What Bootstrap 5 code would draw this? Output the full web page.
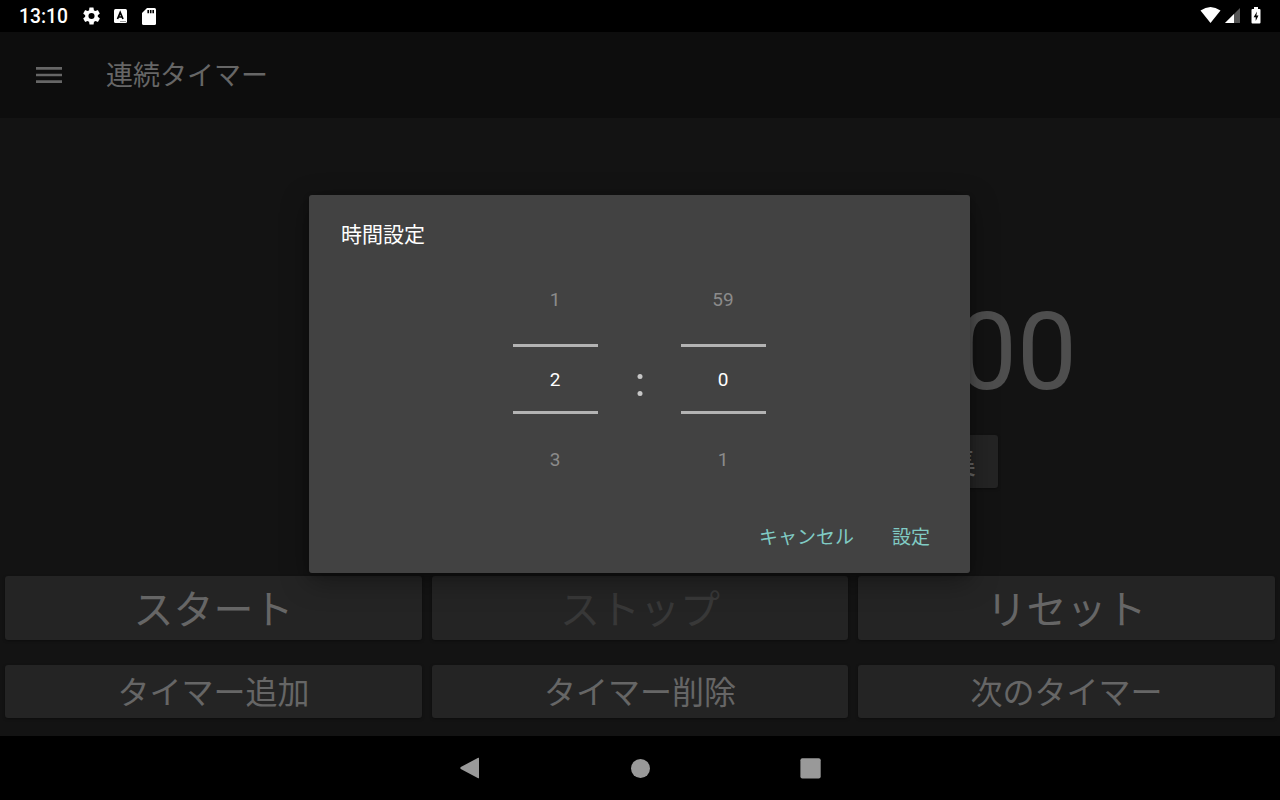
<!DOCTYPE html>
<html lang="ja">
<head>
<meta charset="utf-8">
<meta name="viewport" content="width=device-width, initial-scale=1">
<title>連続タイマー</title>
<link href="https://cdn.jsdelivr.net/npm/bootstrap@5.3.0/dist/css/bootstrap.min.css" rel="stylesheet">
<style>
body{font-family:Roboto,"Noto Sans CJK JP",sans-serif;background:#131313;color:#666;width:1280px;height:800px;line-height:1}
.status-bar{height:32px;background:#000;color:#fff;font-size:19.3px;font-weight:500;padding:0 18px 0 19px}
.clock{width:64px;padding-top:1px}
.icon-app{margin-left:14px}
.icon-card{margin-left:15px}
.icon-signal{margin-left:4px}
.icon-battery{margin:0 1px 2px 11px}
.app-bar{height:86px;background:#0d0d0d;padding-left:36px}
.app-title{font-size:27px;margin-left:44px;padding-top:2px}
.stage{height:458px;padding:172px 203px 0 0}
.digits{font-size:106.67px;line-height:125px;color:#4e4e4e;margin-bottom:20px}
.tile{background:#242424;color:#666;border-radius:3px;box-shadow:0 1px 3px rgba(0,0,0,.35);border:0;padding:3px 0 0;height:53px;font-size:32px;line-height:1}
.tile-lg{height:64px;font-size:40px;padding-top:5px}
.tile:disabled{background:#242424;color:#383838;opacity:1}
.tile-edit{width:108px;margin-right:79px}
.tile-grid{display:grid;grid-template-columns:417px 416px 417px;column-gap:10px;row-gap:25px;padding:0 5px;height:160px;align-content:start}
.nav-keys{height:64px;background:#000;gap:150px}
.scrim{top:32px;left:0;width:1279px;height:704px}
.dialog{width:661px;height:378px;background:#424242;border-radius:3px;box-shadow:0 8px 28px rgba(0,0,0,.35),0 2px 6px rgba(0,0,0,.2);padding:0 32px}
.dialog-title{font-size:21px;color:#fff;height:79px;padding-top:2px}
.pickers{height:214px;padding-right:1px}
.picker{width:85px;font-size:19px;color:#8b8b8b}
.picker>div{height:50px}
.picker .chosen{height:70px;margin:20px 0;border-top:3px solid #b3b3b3;border-bottom:3px solid #b3b3b3;color:#fff}
.sep{width:83px;padding-top:7px;padding-left:1px}
.actions{height:72px;font-size:19px;padding-right:8px;gap:38px}
.act{color:#80cbc4;background:none;border:0;padding:0}
</style>
<script src="https://cdn.jsdelivr.net/npm/bootstrap@5.3.0/dist/js/bootstrap.bundle.min.js"></script>
</head>
<body class="overflow-hidden position-relative d-flex flex-column">
<header class="status-bar d-flex align-items-center flex-shrink-0">
  <span class="clock">13:10</span>
  <svg width="17" height="18" viewBox="2 2 20 20" fill="#fff"><path d="M19.4 13a7.500 7.500 0 0 0 0-2l2.100-1.600a.5.5 0 0 0 .1-.7l-2-3.400a.5.5 0 0 0-.6-.2l-2.500 1a7.300 7.300 0 0 0-1.700-1L14.400 2.400a.5.5 0 0 0-.4-.4h-4a.5.5 0 0 0-.5.400L9.200 5.100a7.700 7.700 0 0 0-1.700 1L5 5.100a.5.5 0 0 0-.6.200l-2 3.400a.5.5 0 0 0 .1.700L4.600 11a7.500 7.500 0 0 0 0 2l-2.100 1.600a.5.5 0 0 0-.1.700l2 3.400c.1.200.4.300.6.200l2.500-1c.5.400 1.100.7 1.700 1l.4 2.700c0 .2.200.4.400.4h4c.2 0 .5-.2.500-.4l.4-2.700a7.300 7.300 0 0 0 1.700-1l2.500 1c.2.100.5 0 .6-.2l2-3.400a.5.5 0 0 0-.1-.7zM12 15.600a3.600 3.600 0 1 1 0-7.200 3.600 3.600 0 0 1 0 7.200z"/></svg>
  <svg class="icon-app" width="13" height="14" viewBox="0 0 13 14"><rect width="13" height="14" rx="1.500" fill="#fff"/><path d="M3.500 10 6.200 3.500 9 10M4.500 8h3.600" stroke="#000" stroke-width="1.700" fill="none"/><path d="M6.500 12.500h1m1 0h1m1 0h1" stroke="#333"/></svg>
  <svg class="icon-card" width="14" height="17" viewBox="0 0 14 17"><path d="M5 0h7.500Q14 0 14 1.500v14Q14 17 12.500 17h-11Q0 17 0 15.500V5z" fill="#fff"/><path d="M6.200 2v3.200M8.700 2v3.200M11.200 2v3.200" stroke="#000" stroke-width="1.600"/></svg>
  <div class="ms-auto d-flex align-items-center">
    <svg width="21" height="18" viewBox="0 0 21 18"><path d="M.5 3.500Q10.500-3.500 20.500 3.500L10.500 16z" fill="#fff"/></svg>
    <svg class="icon-signal" width="15" height="17" viewBox="0 0 15 17"><path d="M15 0v15H0z" fill="#555"/><path d="M9 6v9H0z" fill="#fff"/></svg>
    <svg class="icon-battery" width="10" height="17" viewBox="0 0 10 17"><path d="M3 0h4v2h1.500q1 0 1 1v12.500q0 1-1 1h-7q-1 0-1-1V3q0-1 1-1H3z" fill="#fff"/><path d="M6 4.500 2.600 10.200h2.100V14L7.500 8.500H5.400z" fill="#000"/></svg>
  </div>
</header>
<div class="app-bar d-flex align-items-center flex-shrink-0">
  <svg width="26" height="18" viewBox="0 0 26 18" fill="#666"><path d="M0 1h26v2.700H0zM0 7.700h26v2.600H0zM0 14.300h26V17H0z"/></svg>
  <span class="app-title">連続タイマー</span>
</div>
<main>
  <div class="stage d-flex flex-column align-items-end">
    <div class="digits">2:00</div>
    <button class="btn tile tile-edit">編集</button>
  </div>
  <div class="tile-grid">
    <button class="btn tile tile-lg">スタート</button>
    <button class="btn tile tile-lg" disabled>ストップ</button>
    <button class="btn tile tile-lg">リセット</button>
    <button class="btn tile">タイマー追加</button>
    <button class="btn tile">タイマー削除</button>
    <button class="btn tile">次のタイマー</button>
  </div>
</main>
<footer class="nav-keys d-flex align-items-center justify-content-center flex-shrink-0">
  <svg width="20" height="22" viewBox="0 0 20 22"><path d="M18.200.8Q19 .3 19 1.500v19q0 1.200-.8.700L.8 12q-1-1 0-2z" fill="#999"/></svg>
  <svg width="20" height="20" viewBox="0 0 20 20"><circle cx="10.500" cy="10.500" r="9.500" fill="#999"/></svg>
  <svg width="21" height="22" viewBox="0 0 21 22"><rect x=".4" y="1.200" width="20.300" height="20.300" rx="2" fill="#999"/></svg>
</footer>
<div class="scrim position-absolute d-flex align-items-center justify-content-center">
  <section class="dialog d-flex flex-column" role="dialog">
    <div class="dialog-title d-flex align-items-center">時間設定</div>
    <div class="pickers d-flex justify-content-center align-items-start">
      <div class="picker">
        <div class="d-flex align-items-center justify-content-center">1</div>
        <div class="chosen d-flex align-items-center justify-content-center">2</div>
        <div class="d-flex align-items-center justify-content-center">3</div>
      </div>
      <div class="sep align-self-center d-flex justify-content-center"><svg width="6" height="24" viewBox="0 0 6 24" fill="#c6c6c6"><circle cx="3" cy="3.500" r="2.500"/><circle cx="3" cy="20.500" r="2.500"/></svg></div>
      <div class="picker">
        <div class="d-flex align-items-center justify-content-center">59</div>
        <div class="chosen d-flex align-items-center justify-content-center">0</div>
        <div class="d-flex align-items-center justify-content-center">1</div>
      </div>
    </div>
    <div class="actions d-flex align-items-center justify-content-end mt-auto">
      <button class="act">キャンセル</button>
      <button class="act">設定</button>
    </div>
  </section>
</div>
</body>
</html>
